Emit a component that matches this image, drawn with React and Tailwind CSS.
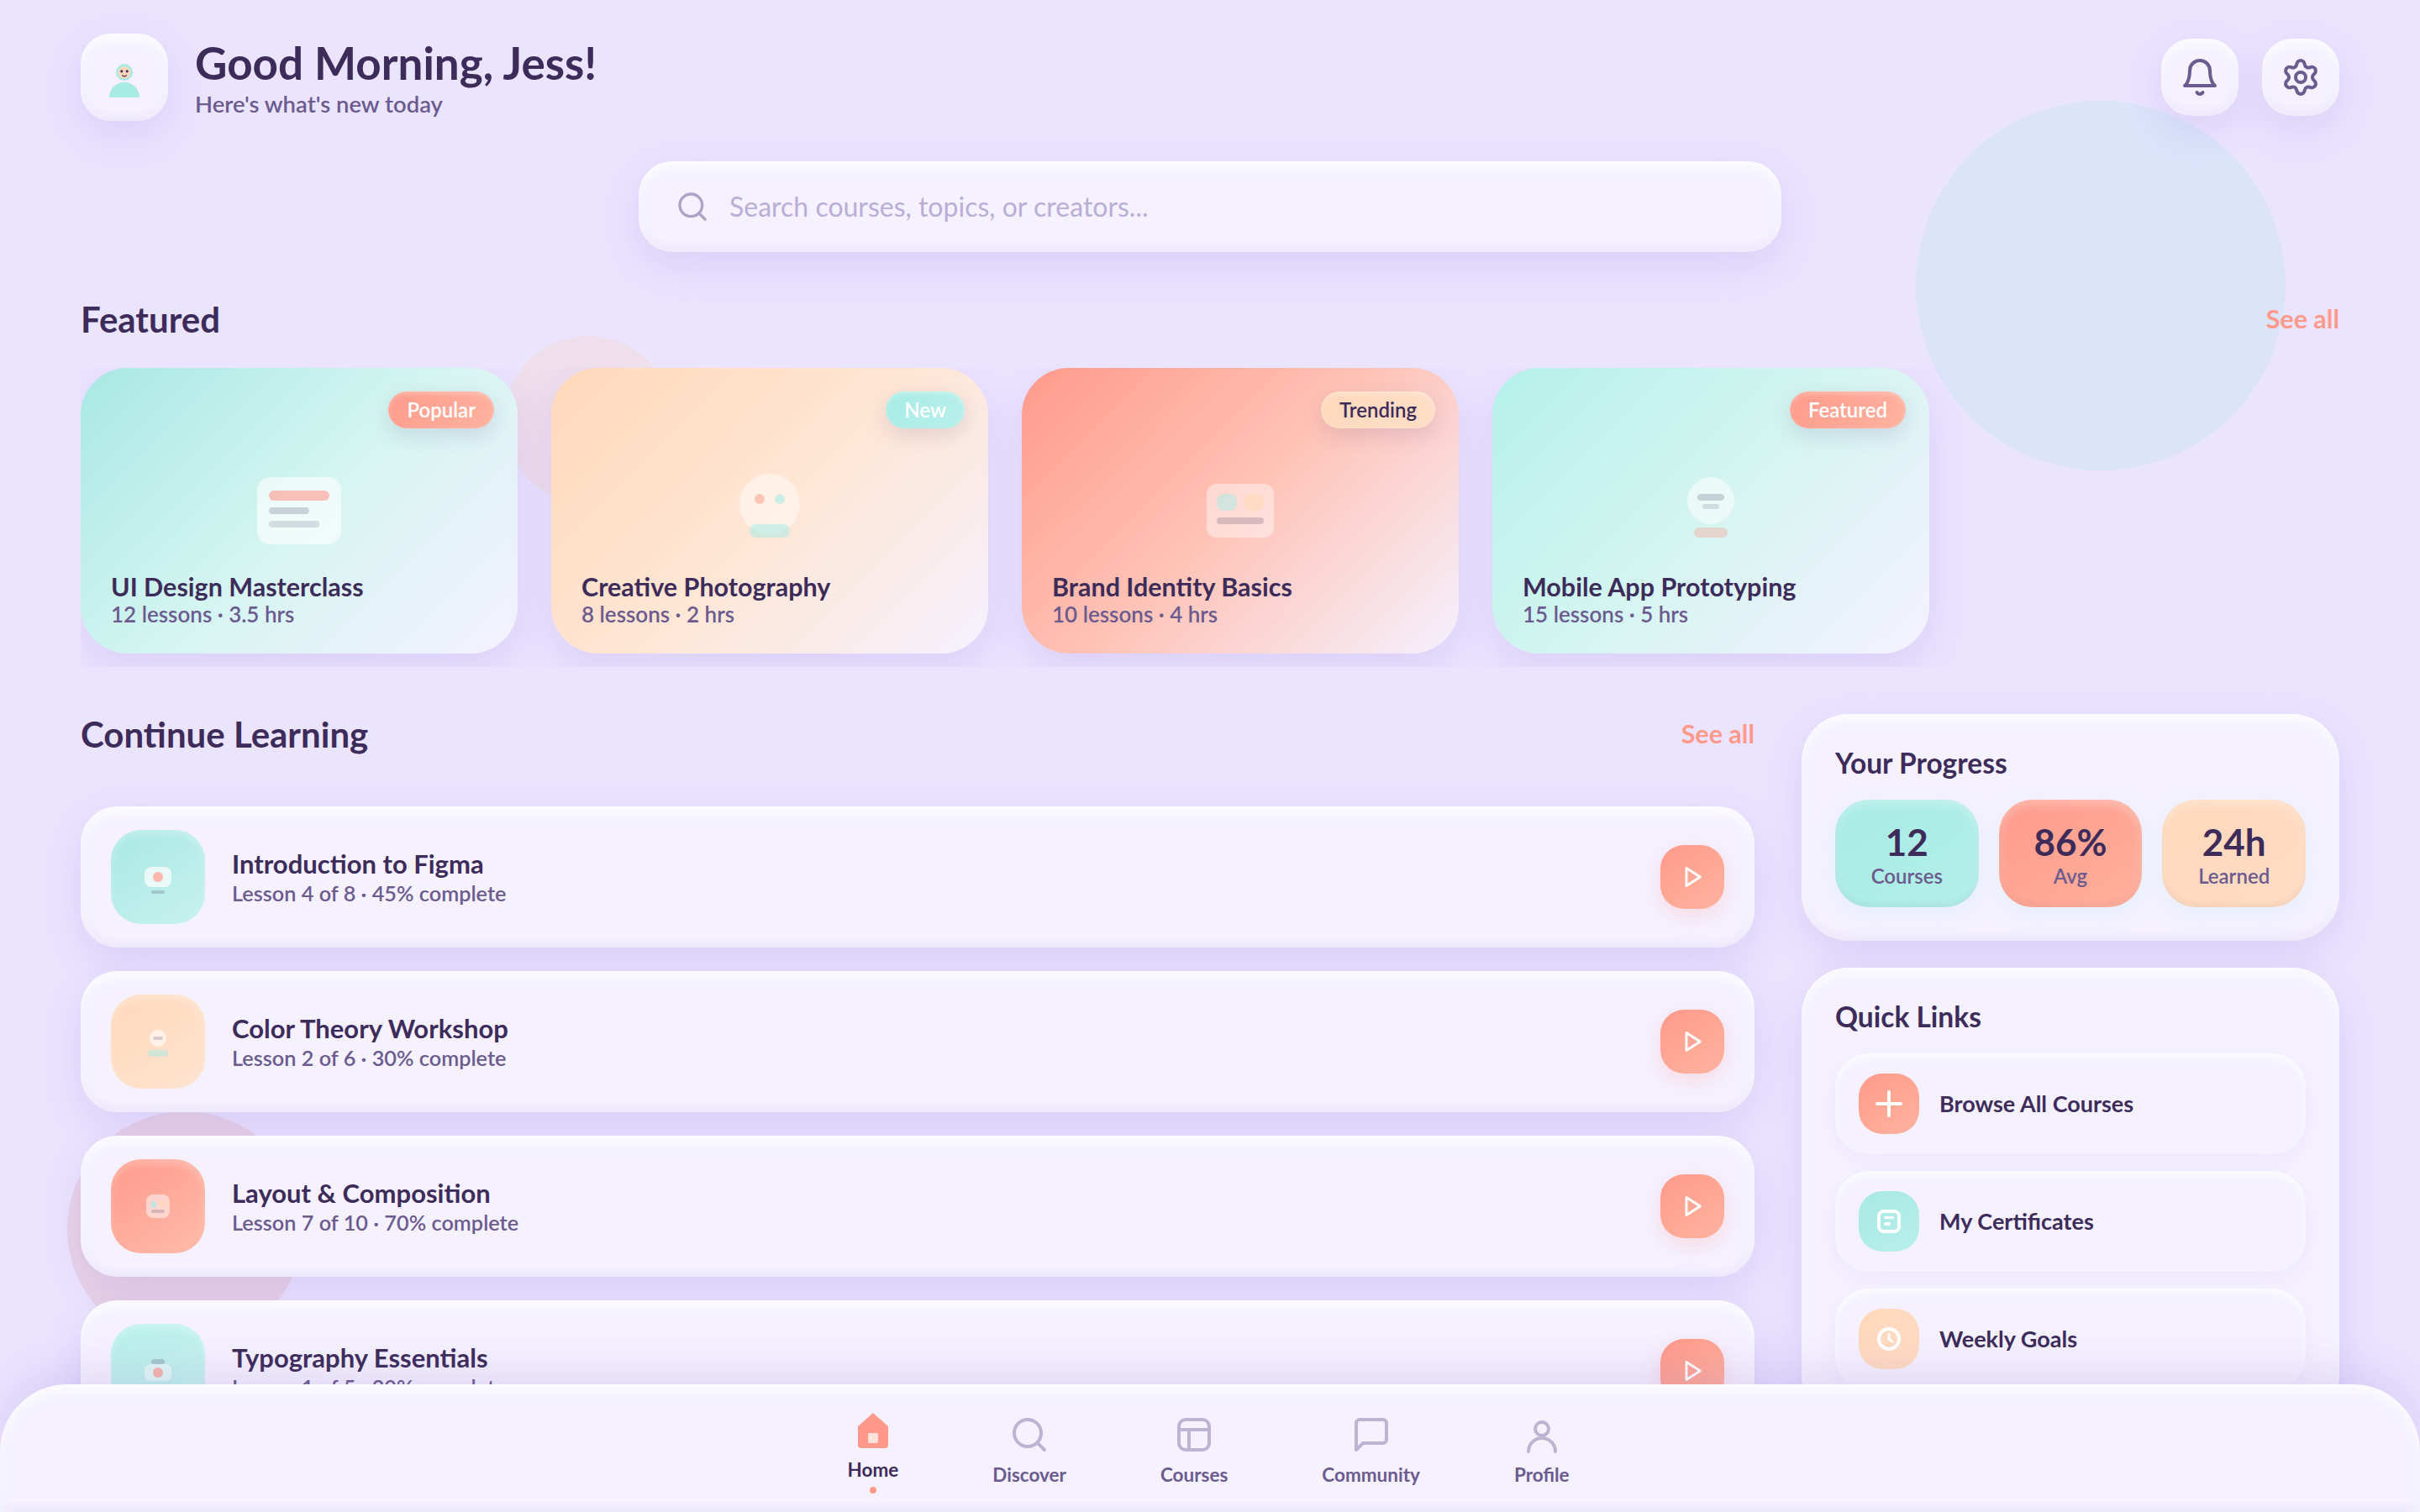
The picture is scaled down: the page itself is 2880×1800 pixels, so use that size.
import React from 'react';
import { Settings } from 'lucide-react';

const font = { fontFamily: '"Lato", "Noto Sans", sans-serif' };

const clay = 'shadow-[0_16px_48px_rgba(120,90,200,0.15),inset_0_8px_14px_rgba(255,255,255,0.75),inset_0_-6px_12px_rgba(100,80,160,0.05)]';

const BellIcon = () => (
  <svg width="48" height="48" viewBox="0 0 24 24" fill="none" stroke="#6b5b8e" strokeWidth="2" strokeLinecap="round" strokeLinejoin="round">
    <path d="M18 8A6 6 0 0 0 6 8c0 7-3 9-3 9h18s-3-2-3-9" />
    <path d="M13.73 21a2 2 0 0 1-3.46 0" />
  </svg>
);

const Avatar = () => (
  <svg width="56" height="56" viewBox="0 0 28 28">
    <circle cx="14" cy="11" r="5" fill="#a8ebe5" />
    <circle cx="14" cy="11.2" r="3.6" fill="#ffd8bc" />
    <circle cx="12.4" cy="10.4" r="0.8" fill="#3d2c5a" />
    <circle cx="15.6" cy="10.4" r="0.8" fill="#3d2c5a" />
    <path d="M12.6 12.6a1.6 1.6 0 0 0 2.8 0" fill="none" stroke="#3d2c5a" strokeWidth="0.6" />
    <path d="M5 26a9 9 0 0 1 18 0z" fill="#a8ebe5" />
  </svg>
);

const IllusLayers = () => (
  <svg width="120" height="120" viewBox="0 0 60 60">
    <rect x="5" y="10" width="50" height="40" rx="8" fill="#fff" opacity="0.6" />
    <rect x="12" y="18" width="36" height="6" rx="3" fill="#ff9a8b" opacity="0.6" />
    <rect x="12" y="28" width="24" height="4" rx="2" fill="#3d2c5a" opacity="0.2" />
    <rect x="12" y="36" width="30" height="4" rx="2" fill="#3d2c5a" opacity="0.15" />
  </svg>
);

const IllusFace = () => (
  <svg width="120" height="120" viewBox="0 0 60 60">
    <circle cx="30" cy="26" r="18" fill="#fff" opacity="0.45" />
    <circle cx="24" cy="23" r="3" fill="#ff9a8b" opacity="0.5" />
    <circle cx="36" cy="23" r="3" fill="#a8ebe5" opacity="0.6" />
    <rect x="18" y="38" width="24" height="8" rx="4" fill="#a8ebe5" opacity="0.55" />
  </svg>
);

const IllusBrand = () => (
  <svg width="120" height="120" viewBox="0 0 60 60">
    <rect x="10" y="14" width="40" height="32" rx="6" fill="#fff" opacity="0.42" />
    <rect x="16" y="20" width="12" height="10" rx="4" fill="#a8ebe5" opacity="0.5" />
    <rect x="32" y="20" width="12" height="10" rx="4" fill="#ffd8bc" opacity="0.7" />
    <rect x="16" y="34" width="28" height="4" rx="2" fill="#3d2c5a" opacity="0.2" />
  </svg>
);

const IllusBulb = () => (
  <svg width="120" height="120" viewBox="0 0 60 60">
    <circle cx="30" cy="24" r="14" fill="#fff" opacity="0.5" />
    <rect x="22" y="20" width="16" height="4" rx="2" fill="#3d2c5a" opacity="0.2" />
    <rect x="25" y="26" width="10" height="3" rx="1.5" fill="#3d2c5a" opacity="0.15" />
    <rect x="20" y="40" width="20" height="6" rx="3" fill="#ff9a8b" opacity="0.35" />
  </svg>
);

const RowFigma = () => (
  <svg width="80" height="80" viewBox="0 0 40 40">
    <rect x="12" y="14" width="16" height="12" rx="4" fill="#fff" opacity="0.7" />
    <circle cx="20" cy="20" r="3" fill="#ff9a8b" opacity="0.7" />
    <rect x="16" y="28" width="8" height="2" rx="1" fill="#3d2c5a" opacity="0.2" />
  </svg>
);

const RowColor = () => (
  <svg width="80" height="80" viewBox="0 0 40 40">
    <circle cx="20" cy="18" r="5" fill="#fff" opacity="0.6" />
    <rect x="17" y="17" width="6" height="2" rx="1" fill="#3d2c5a" opacity="0.2" />
    <rect x="14" y="25" width="12" height="4" rx="2" fill="#a8ebe5" opacity="0.5" />
  </svg>
);

const RowLayout = () => (
  <svg width="80" height="80" viewBox="0 0 40 40">
    <rect x="13" y="13" width="14" height="14" rx="4" fill="#fff" opacity="0.5" />
    <rect x="16" y="17" width="3" height="4" rx="1.5" fill="#a8ebe5" opacity="0.8" />
    <rect x="21" y="17" width="3" height="4" rx="1.5" fill="#ffd8bc" opacity="0.9" />
    <rect x="16" y="22" width="8" height="2" rx="1" fill="#3d2c5a" opacity="0.2" />
  </svg>
);

const RowType = () => (
  <svg width="80" height="80" viewBox="0 0 40 40">
    <rect x="16" y="13" width="8" height="3" rx="1.5" fill="#3d2c5a" opacity="0.2" />
    <rect x="12" y="16" width="16" height="10" rx="3" fill="#fff" opacity="0.5" />
    <circle cx="20" cy="21" r="3" fill="#ff9a8b" opacity="0.7" />
  </svg>
);

const PlayIcon = () => (
  <svg width="28" height="28" viewBox="0 0 24 24" fill="none" stroke="#fff" strokeWidth="2.5" strokeLinecap="round" strokeLinejoin="round">
    <polygon points="6 3 20 12 6 21 6 3" />
  </svg>
);

const PlusIcon = () => (
  <svg width="48" height="48" viewBox="0 0 24 24" fill="none" stroke="#fff" strokeWidth="2" strokeLinecap="round">
    <path d="M12 5v14M5 12h14" />
  </svg>
);

const CertIcon = () => (
  <svg width="48" height="48" viewBox="0 0 24 24" fill="none" stroke="#fff" strokeWidth="2">
    <rect x="6" y="6" width="12" height="12" rx="3" />
    <rect x="9" y="9" width="6" height="1.5" rx="0.75" fill="#fff" stroke="none" />
    <rect x="9" y="12.5" width="4" height="2" rx="1" fill="#fff" stroke="none" />
  </svg>
);

const ClockIcon = () => (
  <svg width="48" height="48" viewBox="0 0 24 24" fill="none" stroke="#fff" strokeWidth="2" strokeLinecap="round" strokeLinejoin="round">
    <circle cx="12" cy="12" r="6" />
    <path d="M12 9v3l2 1.5" strokeWidth="1.5" />
  </svg>
);

const HomeIcon = () => (
  <svg width="48" height="48" viewBox="0 0 24 24">
    <path d="M12 2l9 8v11a2 2 0 0 1-2 2H5a2 2 0 0 1-2-2V10z" fill="#ff9a8b" />
    <rect x="9" y="14" width="6" height="6" rx="1" fill="#fde3da" />
  </svg>
);

const navStroke = { fill: 'none', stroke: '#bcb4d3', strokeWidth: 2, strokeLinecap: 'round', strokeLinejoin: 'round' };

const SearchNavIcon = () => (
  <svg width="48" height="48" viewBox="0 0 24 24" {...navStroke}>
    <circle cx="11" cy="11" r="8" />
    <path d="M21 21l-4.35-4.35" />
  </svg>
);

const CoursesIcon = () => (
  <svg width="48" height="48" viewBox="0 0 24 24" {...navStroke}>
    <rect x="3" y="3" width="18" height="18" rx="4" />
    <path d="M3 9h18M9 21V9" />
  </svg>
);

const ChatIcon = () => (
  <svg width="48" height="48" viewBox="0 0 24 24" {...navStroke}>
    <path d="M21 15a2 2 0 0 1-2 2H7l-4 4V5a2 2 0 0 1 2-2h14a2 2 0 0 1 2 2z" />
  </svg>
);

const UserIcon = () => (
  <svg width="48" height="48" viewBox="0 0 24 24" {...navStroke}>
    <circle cx="12" cy="8.5" r="4" />
    <path d="M4 22a8 8 0 0 1 16 0" />
  </svg>
);

const featured = [
  { title: 'UI Design Masterclass', meta: '12 lessons · 3.5 hrs', badge: 'Popular', bg: 'bg-[linear-gradient(135deg,#a8e8e4,#d5f5f1_50%,#f5f1ff)]', badgeCls: 'bg-[linear-gradient(135deg,#ff9a8b,#ffb3a0)] text-white', art: <IllusLayers /> },
  { title: 'Creative Photography', meta: '8 lessons · 2 hrs', badge: 'New', bg: 'bg-[linear-gradient(135deg,#ffd8bc,#ffe6d4_50%,#f5f1ff)]', badgeCls: 'bg-[linear-gradient(135deg,#a8ebe5,#b8f0ea)] text-white', art: <IllusFace /> },
  { title: 'Brand Identity Basics', meta: '10 lessons · 4 hrs', badge: 'Trending', bg: 'bg-[linear-gradient(135deg,#ff9a8b,#ffc4b8_50%,#f5f1ff)]', badgeCls: 'bg-[linear-gradient(135deg,#ffd8bc,#ffdfc8)] text-[#3d2c5a]', art: <IllusBrand /> },
  { title: 'Mobile App Prototyping', meta: '15 lessons · 5 hrs', badge: 'Featured', bg: 'bg-[linear-gradient(135deg,#b5f0ea,#d5f5f1_50%,#f5f1ff)]', badgeCls: 'bg-[linear-gradient(135deg,#ff9a8b,#ffb3a0)] text-white', art: <IllusBulb /> },
];

const lessons = [
  { title: 'Introduction to Figma', meta: 'Lesson 4 of 8 · 45% complete', bg: 'bg-[linear-gradient(145deg,#a8e8e4,#c8f2ee)]', art: <RowFigma /> },
  { title: 'Color Theory Workshop', meta: 'Lesson 2 of 6 · 30% complete', bg: 'bg-[linear-gradient(145deg,#ffd8bc,#ffe4d0)]', art: <RowColor /> },
  { title: 'Layout & Composition', meta: 'Lesson 7 of 10 · 70% complete', bg: 'bg-[linear-gradient(145deg,#ff9a8b,#ffbbab)]', art: <RowLayout /> },
  { title: 'Typography Essentials', meta: 'Lesson 1 of 5 · 20% complete', bg: 'bg-[linear-gradient(145deg,#b8f0ea,#c8f2ee)]', art: <RowType /> },
];

const stats = [
  { value: '12', label: 'Courses', bg: 'bg-[linear-gradient(145deg,#a8ebe5,#b4efe9)]' },
  { value: '86%', label: 'Avg', bg: 'bg-[linear-gradient(145deg,#ff9a8b,#ffb09c)]' },
  { value: '24h', label: 'Learned', bg: 'bg-[linear-gradient(145deg,#ffd8bc,#ffdcc4)]' },
];

const links = [
  { label: 'Browse All Courses', bg: 'bg-[linear-gradient(145deg,#ff9a8b,#ffb39f)]', icon: <PlusIcon /> },
  { label: 'My Certificates', bg: 'bg-[linear-gradient(145deg,#a8e8e4,#b8f0ea)]', icon: <CertIcon /> },
  { label: 'Weekly Goals', bg: 'bg-[linear-gradient(145deg,#ffd8bc,#ffdcc4)]', icon: <ClockIcon /> },
];

const nav = [
  { label: 'Home', icon: <HomeIcon />, active: true },
  { label: 'Discover', icon: <SearchNavIcon /> },
  { label: 'Courses', icon: <CoursesIcon /> },
  { label: 'Community', icon: <ChatIcon /> },
  { label: 'Profile', icon: <UserIcon /> },
];

const SectionTitle = ({ children }) => (
  <h2 className="text-[42px] leading-[48px] font-bold text-[#3d2c5a]">{children}</h2>
);

const SeeAll = () => <span className="text-[30.5px] font-bold text-[#ff9a8b]">See all</span>;

export default function App() {
  return (
    <div className="relative h-screen overflow-hidden bg-[#ebe4ff]" style={font}>
      {/* background blobs */}
      <div className="absolute left-[2280px] top-[120px] h-[440px] w-[440px] rounded-full bg-[#dce4fa]" />
      <div className="absolute left-[600px] top-[400px] h-[200px] w-[200px] rounded-full bg-[#efdfec]" />
      <div className="absolute left-[80px] top-[1323px] h-[280px] w-[280px] rounded-full bg-[#e8d3e8]" />

      <div className="relative flex flex-col px-24 pt-10">
        <header className="flex h-[104px] items-center justify-between">
          <div className="flex items-center gap-8">
            <div className={`flex h-[104px] w-[104px] items-center justify-center rounded-[36px] bg-[#f5f1ff] ${clay}`}>
              <Avatar />
            </div>
            <div>
              <h1 className="text-[53px] leading-[64px] font-bold text-[#3d2c5a]">Good Morning, Jess!</h1>
              <p className="text-[27.5px] leading-[34px] font-semibold text-[#6b5b8e]">Here's what's new today</p>
            </div>
          </div>
          <div className="flex gap-7">
            <button className={`flex h-[92px] w-[92px] items-center justify-center rounded-[36px] bg-[#f5f1ff] ${clay}`}><BellIcon /></button>
            <button className={`flex h-[92px] w-[92px] items-center justify-center rounded-[36px] bg-[#f5f1ff] ${clay}`}><Settings size={48} color="#6b5b8e" strokeWidth={2} /></button>
          </div>
        </header>

        <div className={`mx-auto mt-12 flex h-[108px] w-[1360px] items-center gap-6 rounded-[40px] bg-[#f5f1ff] px-11 ${clay}`}>
          <svg width="40" height="40" viewBox="0 0 24 24" fill="none" stroke="#ada3c6" strokeWidth="2" strokeLinecap="round"><circle cx="11" cy="11" r="8" /><path d="M21 21l-4.35-4.35" /></svg>
          <span className="text-[32px] text-[#b9aed6]">Search courses, topics, or creators...</span>
        </div>

        <div className="mt-[50px] mb-7 flex h-[60px] items-center justify-between">
          <SectionTitle>Featured</SectionTitle>
          <SeeAll />
        </div>

        <div className="flex gap-10 overflow-hidden pb-4">
          {featured.map((c) => (
            <div key={c.title} className={`relative h-[340px] w-[520px] shrink-0 rounded-[56px] ${c.bg} shadow-[0_16px_48px_rgba(120,90,200,0.15)]`}>
              <span className={`absolute top-7 right-7 flex h-11 items-center rounded-[22px] px-[22px] text-[24px] font-semibold ${c.badgeCls} shadow-[0_8px_24px_rgba(80,60,120,0.15),inset_0_3px_6px_rgba(255,255,255,0.3)]`}>{c.badge}</span>
              <div className="absolute top-[110px] left-[200px]">{c.art}</div>
              <div className="absolute bottom-8 left-9">
                <div className="text-[30.5px] leading-[36px] font-bold text-[#3d2c5a]">{c.title}</div>
                <div className="text-[26px] leading-[30px] font-semibold text-[#6b5b8e]">{c.meta}</div>
              </div>
            </div>
          ))}
        </div>

        <div className="mt-14 flex gap-14">
          <div className="flex-1">
            <div className="mb-[62px] flex h-[48px] items-center justify-between">
              <SectionTitle>Continue Learning</SectionTitle>
              <SeeAll />
            </div>
            <div className="flex flex-col gap-7">
              {lessons.map((l) => (
                <div key={l.title} className={`flex h-[168px] items-center gap-8 rounded-[44px] bg-[#f5f1ff] px-9 ${clay}`}>
                  <div className={`flex h-28 w-28 shrink-0 items-center justify-center rounded-[36px] ${l.bg} shadow-[inset_0_6px_10px_rgba(255,255,255,0.25)]`}>{l.art}</div>
                  <div className="flex-1">
                    <div className="text-[31px] leading-[38px] font-bold text-[#3d2c5a]">{l.title}</div>
                    <div className="text-[25.3px] leading-[32px] font-semibold text-[#6b5b8e]">{l.meta}</div>
                  </div>
                  <div className="flex h-[76px] w-[76px] items-center justify-center rounded-[28px] bg-[linear-gradient(145deg,#ff9a8b,#ffb39f)] shadow-[0_8px_24px_rgba(255,154,139,0.25)]"><PlayIcon /></div>
                </div>
              ))}
            </div>
          </div>

          <div className="flex w-[640px] flex-col gap-8">
            <div className={`rounded-[56px] bg-[#f5f1ff] px-10 pt-9 pb-10 ${clay}`}>
              <h3 className="mb-[22px] text-[33.5px] leading-[44px] font-bold text-[#3d2c5a]">Your Progress</h3>
              <div className="flex gap-6">
                {stats.map((s) => (
                  <div key={s.label} className={`flex h-32 flex-1 flex-col items-center justify-center rounded-[40px] pt-0.5 ${s.bg} shadow-[0_8px_24px_rgba(168,235,229,0.2),inset_0_6px_12px_rgba(255,255,255,0.3),inset_0_-4px_8px_rgba(0,0,0,0.05)]`}>
                    <div className="text-[44px] leading-[52px] font-bold text-[#3d2c5a]">{s.value}</div>
                    <div className="text-[24px] leading-[30px] font-semibold text-[#6b5b8e]">{s.label}</div>
                  </div>
                ))}
              </div>
            </div>

            <div className={`rounded-[56px] bg-[#f5f1ff] px-10 pt-9 pb-10 ${clay}`}>
              <h3 className="mb-[22px] text-[33.5px] leading-[44px] font-bold text-[#3d2c5a]">Quick Links</h3>
              <div className="flex flex-col gap-5">
                {links.map((q) => (
                  <div key={q.label} className="flex h-[120px] items-center gap-6 rounded-[40px] bg-[#f5f1ff] px-7 shadow-[0_8px_24px_rgba(120,90,200,0.06),inset_0_6px_10px_rgba(255,255,255,0.7)]">
                    <div className={`flex h-[72px] w-[72px] items-center justify-center rounded-[28px] ${q.bg}`}>{q.icon}</div>
                    <span className="text-[27px] font-bold text-[#3d2c5a]">{q.label}</span>
                  </div>
                ))}
              </div>
            </div>
          </div>
        </div>
      </div>

      <nav className="absolute inset-x-0 bottom-0 flex h-[152px] items-center justify-center gap-[112px] rounded-t-[80px] bg-[#f5f1ff] pt-2 pr-1 shadow-[0_-16px_48px_rgba(120,90,200,0.15),inset_0_8px_14px_rgba(255,255,255,0.75),inset_0_-6px_12px_rgba(100,80,160,0.05)]">
        {nav.map((n) => (
          <div key={n.label} className="flex flex-col items-center">
            {n.icon}
            <span className={`mt-2 text-[22.5px] leading-[32px] font-bold ${n.active ? 'text-[#3d2c5a]' : 'text-[#6b5b8e]'}`}>{n.label}</span>
            {n.active && <span className="mt-1 h-2 w-2 rounded-full bg-[#ff9a8b]" />}
          </div>
        ))}
      </nav>
    </div>
  );
}
